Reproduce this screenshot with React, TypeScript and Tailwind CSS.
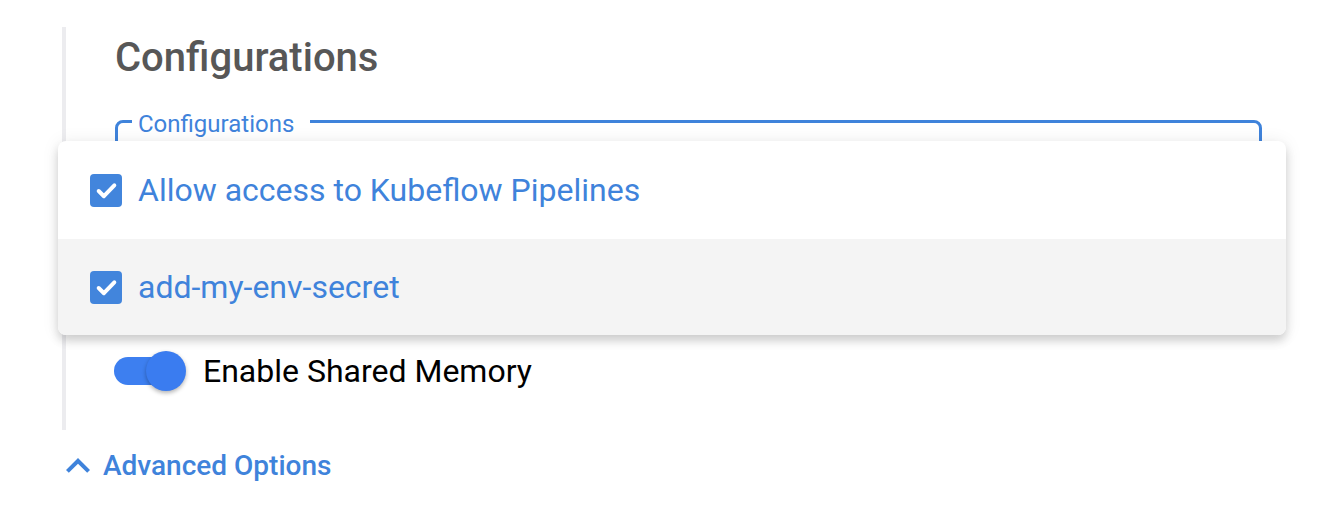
import React from 'react';

const font = { fontFamily: 'Roboto, "Noto Sans", sans-serif' };

function Check() {
  return (
    <div className="w-[32px] h-[33px] rounded-[4px] bg-[#4285dc] flex items-center justify-center shrink-0">
      <svg width="25" height="25" viewBox="0 0 24 24" fill="none">
        <path d="M4.5 12.5l5 5L19.5 7" stroke="white" strokeWidth="3.8" strokeLinecap="round" strokeLinejoin="round" />
      </svg>
    </div>
  );
}

const options = [
  { label: 'Allow access to Kubeflow Pipelines', active: false },
  { label: 'add-my-env-secret', active: true },
];

export default function App() {
  return (
    <div className="relative w-[1330px] h-[525px] bg-white overflow-hidden" style={font}>
      {/* card below, only its side shadow shows */}
      <div className="absolute left-[58px] top-[522px] w-[1228px] h-[40px] bg-white shadow-[0_14px_14px_rgba(0,0,0,0.16)]" />

      <div className="relative pt-[27px]">
        <div className="ml-[62px] border-l-4 border-[#ececef] pl-[49px] pt-[8px] pb-[39px]">
          <h2 className="text-[40px] leading-[46px] font-medium text-[#575757]">Configurations</h2>

          <fieldset className="mt-[26px] w-[1147px] h-[225px] border-[3px] border-[#3f83db] rounded-[8px] px-[14px]">
            <legend className="pl-[6px] pr-[16px] pt-[5px] text-[24px] leading-[24px] text-[#3f83db]">Configurations</legend>
          </fieldset>

          <div className="mt-[19px] flex items-center h-[40px]">
            <div className="relative w-[72px] h-[40px] -ml-[1px] shrink-0">
              <div className="absolute left-0 top-[6px] w-[64px] h-[28px] rounded-full bg-[#3d7ff0]" />
              <div className="absolute right-0 top-0 w-[40px] h-[40px] rounded-full bg-[#3a7cf0] shadow-[0_2px_4px_rgba(0,0,0,0.3)]" />
            </div>
            <span className="ml-[17px] text-[32px] text-black">Enable Shared Memory</span>
          </div>
        </div>

        <button className="ml-[54px] mt-[12px] flex items-center text-[#3f83db]">
          <svg width="48" height="48" viewBox="0 0 24 24" fill="currentColor">
            <path d="M12 8l-6 6 1.41 1.41L12 10.83l4.59 4.58L18 14z" />
          </svg>
          <span className="ml-px text-[28px] font-medium leading-[48px]">Advanced Options</span>
        </button>
      </div>

      {/* open select menu */}
      <div className="absolute left-[58px] top-[141px] w-[1228px] rounded-[8px] bg-white overflow-hidden shadow-[0_6px_10px_rgba(0,0,0,0.16),0_1px_18px_rgba(0,0,0,0.08)]">
        {options.map((o, i) => (
          <div
            key={o.label}
            className={`flex items-center pl-[32px] gap-[16px] ${i === 0 ? 'h-[98px]' : 'h-[96px]'} ${o.active ? 'bg-[#f4f4f4]' : ''}`}
          >
            <Check />
            <span className="text-[32px] text-[#3f83db]">{o.label}</span>
          </div>
        ))}
      </div>
    </div>
  );
}
